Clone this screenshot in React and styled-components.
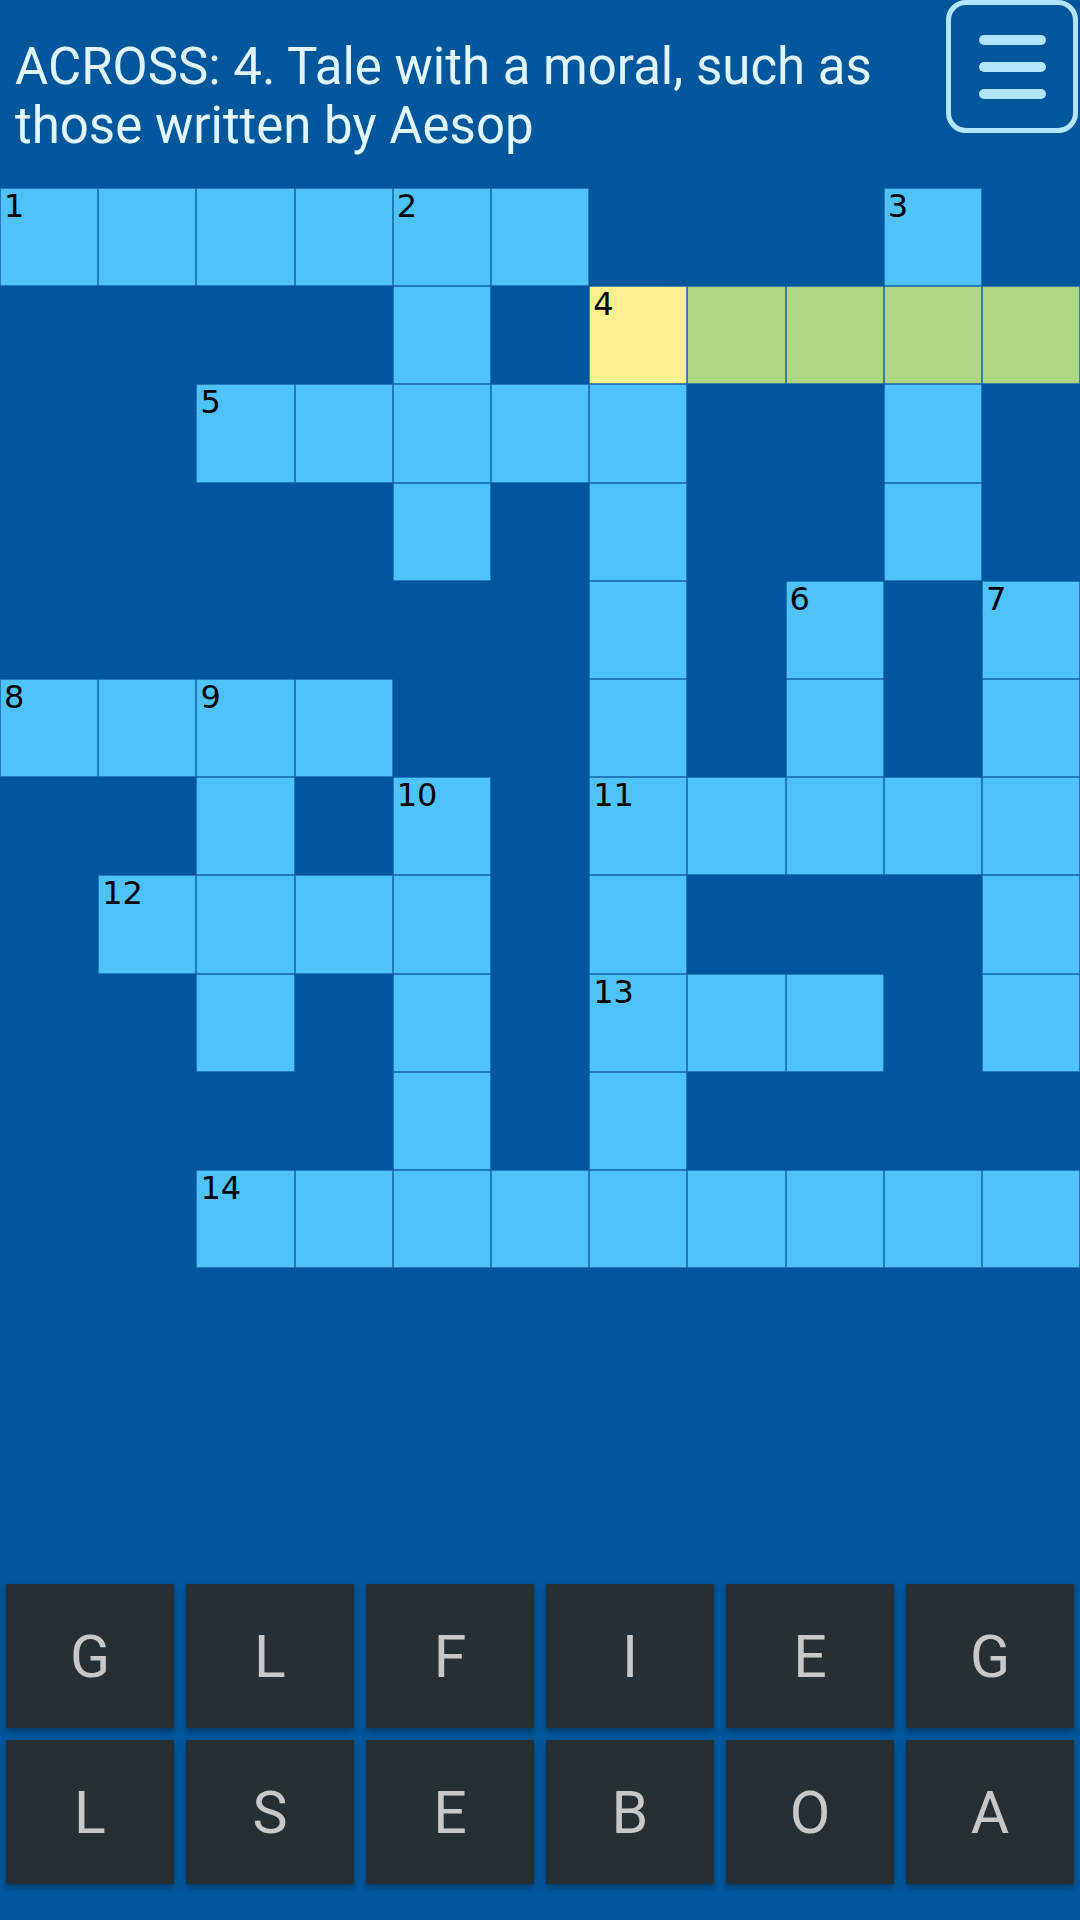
import React from "react";
import styled, { createGlobalStyle } from "styled-components";

const GlobalStyle = createGlobalStyle`
  html, body {
    margin: 0;
    padding: 0;
    background: #01579b;
  }
  body {
    font-family: Roboto, "Noto Sans", sans-serif;
  }
`;

// 11x11 board: "." empty, "o" open, "y" selected cell, "g" selected word
const layout = [
  "oooooo...o.",
  "....o.ygggg",
  "..ooooo..o.",
  "....o.o..o.",
  "......o.o.o",
  "oooo..o.o.o",
  "..o.o.ooooo",
  ".oooo.o...o",
  "..o.o.ooo.o",
  "....o.o....",
  "..ooooooooo",
];

const numbers = {
  "0-0": 1,
  "0-4": 2,
  "0-9": 3,
  "1-6": 4,
  "2-2": 5,
  "4-8": 6,
  "4-10": 7,
  "5-0": 8,
  "5-2": 9,
  "6-4": 10,
  "6-6": 11,
  "7-1": 12,
  "8-6": 13,
  "10-2": 14,
};

const keys = [
  ["G", "L", "F", "I", "E", "G"],
  ["L", "S", "E", "B", "O", "A"],
];

const cellColors = {
  o: "#4fc3f7",
  y: "#faf08f",
  g: "#aed581",
};

export default function App() {
  return (
    <>
      <GlobalStyle />
      <Page>
        <Header>
          <Clue>ACROSS: 4. Tale with a moral, such as those written by Aesop</Clue>
          <MenuButton aria-label="menu">
            <span />
            <span />
            <span />
          </MenuButton>
        </Header>

        <Board>
          {layout.map((row, r) =>
            row.split("").map((ch, c) => (
              <Cell key={`${r}-${c}`} $kind={ch}>
                {numbers[`${r}-${c}`] && <Num>{numbers[`${r}-${c}`]}</Num>}
              </Cell>
            ))
          )}
        </Board>

        <Keyboard>
          {keys.map((row, i) => (
            <KeyRow key={i}>
              {row.map((k, j) => (
                <Key key={j}>{k}</Key>
              ))}
            </KeyRow>
          ))}
        </Keyboard>
      </Page>
    </>
  );
}

const Page = styled.div`
  width: 1080px;
  height: 1920px;
  display: flex;
  flex-direction: column;
  background: #01579b;
  overflow: hidden;
`;

const Header = styled.header`
  height: 188px;
  display: flex;
  justify-content: space-between;
  align-items: flex-start;
  padding: 0 2px 0 15px;
  box-sizing: border-box;
`;

const Clue = styled.div`
  margin-top: 37px;
  width: 900px;
  color: #e1f5fe;
  font-size: 51px;
  line-height: 59px;
`;

const MenuButton = styled.button`
  width: 132px;
  height: 133px;
  flex-shrink: 0;
  box-sizing: border-box;
  border: 5px solid #b3e5fc;
  border-radius: 20px;
  background: transparent;
  display: flex;
  flex-direction: column;
  justify-content: center;
  align-items: center;
  gap: 17px;
  padding: 0;

  span {
    display: block;
    width: 67px;
    height: 10px;
    border-radius: 5px;
    background: #b3e5fc;
  }
`;

const Board = styled.div`
  display: grid;
  grid-template-columns: repeat(11, 1fr);
  width: 1080px;
`;

const Cell = styled.div`
  aspect-ratio: 1;
  position: relative;
  background: ${(p) => cellColors[p.$kind] || "transparent"};
  box-shadow: ${(p) =>
    cellColors[p.$kind] ? "inset 0 0 0 0.75px #1762a8" : "none"};
`;

const Num = styled.span`
  position: absolute;
  left: 4px;
  top: 2px;
  font-family: "DejaVu Sans", "Noto Sans", sans-serif;
  font-size: 32px;
  line-height: 1;
  color: #000;
`;

const Keyboard = styled.div`
  margin-top: auto;
  padding: 0 6px 36px;
  display: flex;
  flex-direction: column;
  gap: 12px;
`;

const KeyRow = styled.div`
  display: grid;
  grid-template-columns: repeat(6, 1fr);
  gap: 12px;
`;

const Key = styled.div`
  height: 144px;
  background: #263034;
  color: #c8c8c8;
  font-size: 59px;
  display: flex;
  align-items: center;
  justify-content: center;
  box-shadow: 0 4px 6px rgba(0, 0, 0, 0.3);
`;
